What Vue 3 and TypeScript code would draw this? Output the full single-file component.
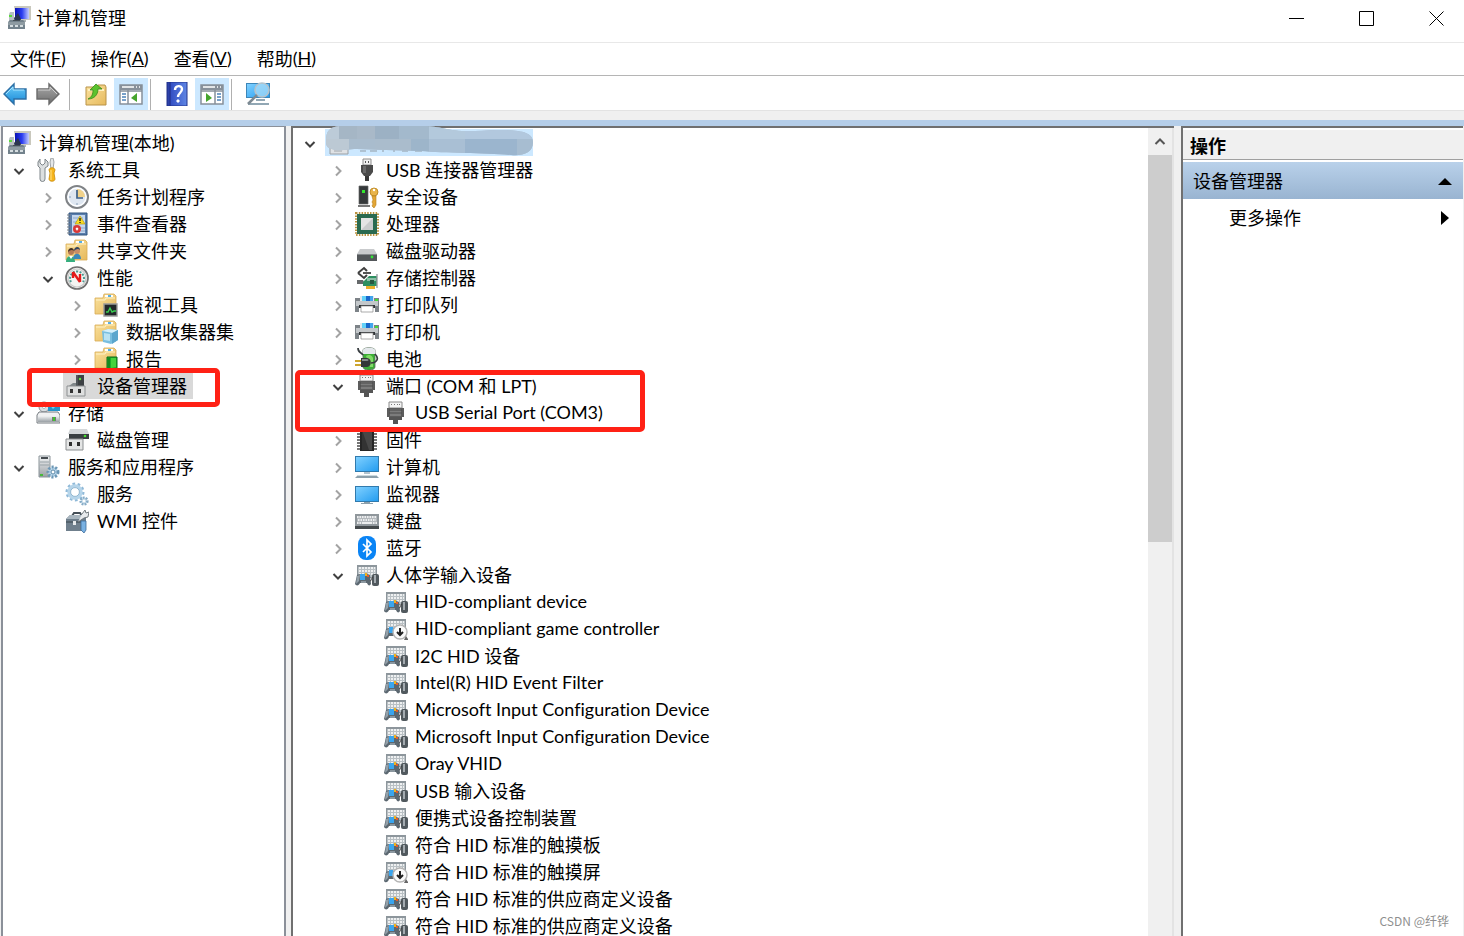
<script setup lang="ts">
interface TreeNode {
  label: string
  icon: string
  depth: number
  open?: boolean
  selected?: boolean
  masked?: boolean
  mark?: string
}

interface Run {
  text: string
  latin: boolean
}

const menus = [
  { label: '文件', key: 'F' },
  { label: '操作', key: 'A' },
  { label: '查看', key: 'V' },
  { label: '帮助', key: 'H' },
]

const consoleTree: TreeNode[] = [
  { label: '计算机管理(本地)', icon: 'console', depth: 0 },
  { label: '系统工具', icon: 'tools', depth: 1, open: true },
  { label: '任务计划程序', icon: 'clock', depth: 2, open: false },
  { label: '事件查看器', icon: 'events', depth: 2, open: false },
  { label: '共享文件夹', icon: 'shared', depth: 2, open: false },
  { label: '性能', icon: 'gauge', depth: 2, open: true },
  { label: '监视工具', icon: 'monitoring', depth: 3, open: false },
  { label: '数据收集器集', icon: 'collector', depth: 3, open: false },
  { label: '报告', icon: 'report', depth: 3, open: false },
  { label: '设备管理器', icon: 'devmgr', depth: 2, selected: true, mark: 'mark-device' },
  { label: '存储', icon: 'storage', depth: 1, open: true },
  { label: '磁盘管理', icon: 'diskmgr', depth: 2 },
  { label: '服务和应用程序', icon: 'services', depth: 1, open: true },
  { label: '服务', icon: 'gears', depth: 2 },
  { label: 'WMI 控件', icon: 'wmi', depth: 2 },
]

const hid = (label: string, icon = 'hid'): TreeNode => ({ label, icon, depth: 2 })

const deviceTree: TreeNode[] = [
  { label: '', icon: 'pc', depth: 0, open: true, masked: true },
  { label: 'USB 连接器管理器', icon: 'usb', depth: 1, open: false },
  { label: '安全设备', icon: 'security', depth: 1, open: false },
  { label: '处理器', icon: 'cpu', depth: 1, open: false },
  { label: '磁盘驱动器', icon: 'drive', depth: 1, open: false },
  { label: '存储控制器', icon: 'controller', depth: 1, open: false },
  { label: '打印队列', icon: 'printer', depth: 1, open: false },
  { label: '打印机', icon: 'printer', depth: 1, open: false },
  { label: '电池', icon: 'battery', depth: 1, open: false },
  { label: '端口 (COM 和 LPT)', icon: 'port', depth: 1, open: true, mark: 'mark-port' },
  { label: 'USB Serial Port (COM3)', icon: 'port', depth: 2 },
  { label: '固件', icon: 'firmware', depth: 1, open: false },
  { label: '计算机', icon: 'computer', depth: 1, open: false },
  { label: '监视器', icon: 'display', depth: 1, open: false },
  { label: '键盘', icon: 'keyboard', depth: 1, open: false },
  { label: '蓝牙', icon: 'bluetooth', depth: 1, open: false },
  { label: '人体学输入设备', icon: 'hid', depth: 1, open: true },
  hid('HID-compliant device'),
  hid('HID-compliant game controller', 'hid-off'),
  hid('I2C HID 设备'),
  hid('Intel(R) HID Event Filter'),
  hid('Microsoft Input Configuration Device'),
  hid('Microsoft Input Configuration Device'),
  hid('Oray VHID'),
  hid('USB 输入设备'),
  hid('便携式设备控制装置'),
  hid('符合 HID 标准的触摸板'),
  hid('符合 HID 标准的触摸屏', 'hid-off'),
  hid('符合 HID 标准的供应商定义设备'),
  hid('符合 HID 标准的供应商定义设备'),
]

const panes = [
  { id: 'console', label: '控制台树', nodes: consoleTree },
  { id: 'devices', label: '设备', nodes: deviceTree },
]

function runs(label: string): Run[] {
  const parts = label.match(/[\x20-\x7e]+|[^\x20-\x7e]+/g) ?? []
  return parts.map((text) => ({ text, latin: text.charCodeAt(0) < 128 }))
}
</script>

<template>
  <div class="window">
    <svg class="sprite" aria-hidden="true">
      <defs>
        <linearGradient id="g-blue" x1="0" y1="0" x2="1" y2="1">
          <stop offset="0" stop-color="#7fd0ff" /><stop offset="1" stop-color="#259df0" />
        </linearGradient>
        <linearGradient id="g-deep" x1="0" y1="0" x2="1" y2="0">
          <stop offset="0" stop-color="#0a12b4" /><stop offset="0.5" stop-color="#2b3df0" /><stop offset="1" stop-color="#c4ccff" />
        </linearGradient>
        <linearGradient id="g-gray" x1="0" y1="0" x2="0" y2="1">
          <stop offset="0" stop-color="#f1f3f4" /><stop offset="1" stop-color="#9aa0a5" />
        </linearGradient>
        <linearGradient id="g-folder" x1="0" y1="0" x2="1" y2="1">
          <stop offset="0" stop-color="#fbe3a0" /><stop offset="1" stop-color="#e6b95c" />
        </linearGradient>
        <linearGradient id="g-arrow" x1="0" y1="0" x2="0" y2="1">
          <stop offset="0" stop-color="#6fd0fb" /><stop offset="1" stop-color="#1787d6" />
        </linearGradient>
        <linearGradient id="g-arrow2" x1="0" y1="0" x2="0" y2="1">
          <stop offset="0" stop-color="#a9a9a9" /><stop offset="1" stop-color="#6e6e6e" />
        </linearGradient>
        <linearGradient id="g-help" x1="0" y1="0" x2="1" y2="0">
          <stop offset="0" stop-color="#26389c" /><stop offset="0.2" stop-color="#3450c4" /><stop offset="1" stop-color="#5f86e4" />
        </linearGradient>
      </defs>

      <symbol id="i-console" viewBox="0 0 24 24">
        <path d="M3 6h4v12H2V8z" fill="#b9c0c4" /><path d="M2 9h3v2H2z" fill="#5bdc3a" />
        <path d="M7 0h17v14H9z" fill="#c9c8bd" /><path d="M8 2h14v11H8z" fill="url(#g-deep)" />
        <path d="M7 12l4-5 3 6-2 5H8z" fill="#2a3550" />
        <path d="M13 14h6v2h-5z" fill="#aeb4b5" />
        <path d="M1 16l2-2h13l2 2v7H1z" fill="#73828c" /><path d="M1 16h17v3H1z" fill="#8e9ba2" />
        <path d="M3 19h3v2H3zM8 19h3v2H8zM13 19h3v2h-3z" fill="#d5dde0" />
        <path d="M6 14h7v1H6z" fill="#444e55" />
      </symbol>
      <symbol id="i-tools" viewBox="0 0 24 24">
        <path d="M4 1L4 5l2 2h1l2-2V1l3 3v4L9 10v11a2 2 0 0 1-5 0V10L2 8V4z" fill="#dcdfe0" stroke="#7f868a" />
        <path d="M15 0h2l1 4-1 7h-2l-1-7z" fill="#e5e7e8" stroke="#8b9093" stroke-width=".8" />
        <path d="M13 12c0-3 6-3 6 0l-1 3 1 6c0 3-6 3-6 0l1-6z" fill="#f6b51c" stroke="#c98a08" stroke-width=".8" /><path d="M15 12v10" stroke="#ffe28a" />
      </symbol>
      <symbol id="i-clock" viewBox="0 0 24 24">
        <circle cx="12" cy="12" r="11" fill="#dfe7f1" stroke="#808386" stroke-width="2" /><circle cx="12" cy="12" r="9" fill="none" stroke="#fff" stroke-width="1.3" />
        <path d="M12 12V4a8 8 0 0 1 8 8z" fill="#f1d28a" /><path d="M12 5v8h6" fill="none" stroke="#3f6288" stroke-width="1.7" />
        <path d="M12 18v2M4 12h2" stroke="#8aa0b8" />
      </symbol>
      <symbol id="i-events" viewBox="0 0 24 24">
        <path d="M4 1h18v22H4z" fill="#5a7fae" stroke="#31547f" /><path d="M7 3h13v18H7z" fill="#c4d7ee" />
        <path d="M2 3h4M2 6h4M2 9h4M2 12h4M2 15h4M2 18h4M2 21h4" stroke="#777f87" />
        <path d="M8 6h10M8 10h5M8 14h4M15 16h5M16 19h4" stroke="#90a9ca" />
        <path d="M15 4l5 8H10z" fill="#fadb21" stroke="#b89b12" stroke-width=".7" /><path d="M15 6v3M15 10v1" stroke="#222" stroke-width="1.4" />
        <circle cx="12" cy="17" r="4" fill="#d93838" /><path d="M11 16l2 2M13 16l-2 2" stroke="#fff" stroke-width="1.3" />
      </symbol>
      <symbol id="i-folder" viewBox="0 0 24 24">
        <path d="M1 5h8l1-4h10l2 2v18H1z" fill="url(#g-folder)" stroke="#d8ab54" stroke-width=".8" />
        <path d="M11 2h8v2h-8z" fill="#fff" /><path d="M14 2h3v2h-3z" fill="#55aee6" /><path d="M2 7h9l1-2h9" fill="none" stroke="#fff2c6" />
      </symbol>
      <symbol id="i-shared" viewBox="0 0 24 24">
        <use href="#i-folder" width="24" height="24" />
        <circle cx="6" cy="13" r="3" fill="#b67b55" /><path d="M3 13c0-5 6-5 6-1-2-2-4-1-6 1z" fill="#463226" /><path d="M1 23c0-8 9-8 9 0z" fill="#35ae7e" />
        <circle cx="12" cy="12" r="3" fill="#c98d66" /><path d="M9 12c0-5 6-5 6-1-2-2-4-1-6 1z" fill="#33475e" /><path d="M8 20c0-7 8-7 8 0z" fill="#3b88b8" /><path d="M4 17l2 3 2-3" fill="#fff" />
      </symbol>
      <symbol id="i-gauge" viewBox="0 0 24 24">
        <circle cx="12" cy="12" r="11" fill="#f4f4f2" stroke="#707070" stroke-width="1.7" /><circle cx="12" cy="12" r="9" fill="none" stroke="#c9c9c9" stroke-width="1.2" />
        <path d="M6 16a7 7 0 1 1 12 0" fill="none" stroke="#4a9a91" stroke-width="2" stroke-dasharray="2 1.4" />
        <path d="M8 6v6M8 6l7 10M15 8v8" fill="none" stroke="#e41b1b" stroke-width="2.4" />
      </symbol>
      <symbol id="i-monitoring" viewBox="0 0 24 24">
        <use href="#i-folder" width="24" height="24" /><path d="M10 11h13v12H10z" fill="#23282a" stroke="#9a9a9a" stroke-width="1.4" />
        <path d="M12 19h2l2-4 2 4 2-1h2" fill="none" stroke="#39cf52" stroke-width="1.4" />
      </symbol>
      <symbol id="i-collector" viewBox="0 0 24 24">
        <use href="#i-folder" width="24" height="24" /><path d="M8 11l6-2 10 1v10l-7 4-8-2z" fill="#79bedf" /><path d="M8 11l6-2 10 1-5 3z" fill="#d5f0fb" /><path d="M18 13l6-3v10l-6 4z" fill="#5ba6cd" /><path d="M10 13l6 1v7l-6-1z" fill="#b9e2f2" />
      </symbol>
      <symbol id="i-report" viewBox="0 0 24 24">
        <use href="#i-folder" width="24" height="24" /><path d="M13 10h10v12H13z" fill="#1fae2c" stroke="#0d6b18" /><path d="M15 11v10" stroke="#0f7f1d" stroke-width="1.5" /><path d="M17 11h5v9l-5 1z" fill="#45d23d" />
      </symbol>
      <symbol id="i-devmgr" viewBox="0 0 24 24">
        <path d="M11 1h8v11h-8z" fill="#3d4144" /><path d="M12 1v10" stroke="#6a7074" /><circle cx="15" cy="5" r="1.2" fill="#5ae83a" />
        <path d="M8 9h3v3H4z" fill="#7f8689" /><path d="M2 12h18v10H2z" fill="#dedfdf" stroke="#8c8f91" /><path d="M5 15h3v4H5zM13 15h3v4h-3z" fill="#333" />
      </symbol>
      <symbol id="i-storage" viewBox="0 0 24 24">
        <circle cx="8" cy="6" r="5" fill="#d9dee2" stroke="#8a9196" /><circle cx="8" cy="6" r="1.600" fill="#fff" stroke="#999" stroke-width=".6" />
        <path d="M12 2h12v8H12z" fill="#2794c8" /><path d="M13 3h9l-5 5z" fill="#76d0ef" /><path d="M3 11h19l2 3v8H1v-8z" fill="#f0f1f2" stroke="#767c81" /><path d="M2 15h21v6H2z" fill="url(#g-gray)" /><path d="M16 16h4v4h-4z" fill="#777" /><path d="M17 16h2v4h-2z" fill="#43c42f" />
      </symbol>
      <symbol id="i-diskmgr" viewBox="0 0 24 24">
        <path d="M5 1h17l2 5H3z" fill="#d4d7d9" /><path d="M4 6h20v5H4z" fill="#3a3f42" /><circle cx="20" cy="8" r="1.300" fill="#45e02e" />
        <path d="M1 11h17v11H1z" fill="#e4e5e5" stroke="#8c8f91" /><path d="M4 14h3v4H4zM12 14h3v4h-3z" fill="#2f2f2f" />
      </symbol>
      <symbol id="i-services" viewBox="0 0 24 24">
        <path d="M3 1h11v21H3z" fill="url(#g-gray)" stroke="#8b9499" /><path d="M5 2h7v2H5z" fill="#464d51" /><path d="M4 7h9M4 10h9" stroke="#98a2a7" /><path d="M4 19h3v2H4z" fill="#49b83b" />
        <circle cx="17" cy="17" r="5" fill="#b9d6ea" stroke="#6b96b5" stroke-width="3" stroke-dasharray="2 1.6" /><circle cx="17" cy="17" r="2" fill="#fff" stroke="#5d89a8" />
      </symbol>
      <symbol id="i-gears" viewBox="0 0 24 24">
        <circle cx="10" cy="10" r="8" fill="none" stroke="#8fb9d8" stroke-width="3" stroke-dasharray="2.6 2.4" /><circle cx="10" cy="10" r="6" fill="none" stroke="#b6d5ea" stroke-width="3.4" /><circle cx="10" cy="10" r="4.4" fill="#fff" stroke="#7fa9c6" stroke-width=".8" />
        <circle cx="19" cy="19" r="3.4" fill="#c7dcea" stroke="#86abc6" stroke-width="2.4" stroke-dasharray="1.7 1.2" /><circle cx="19" cy="19" r="1.3" fill="#fff" />
      </symbol>
      <symbol id="i-wmi" viewBox="0 0 24 24">
        <path d="M7 7l2-3h6l2 3" fill="none" stroke="#454f57" stroke-width="2" /><path d="M1 10l4-4h16v13l-3 3H1z" fill="#6f7f8c" /><path d="M1 10l4-4h16l-3 4z" fill="#a9b6bf" /><path d="M1 13h17" stroke="#4a565f" stroke-width="1.4" /><path d="M8 12h3v4H8z" fill="#e6e9eb" />
        <path d="M17 5l3-4 1 3 3-1-1 5-4 1-6 4" fill="#e7eaec" stroke="#666e73" stroke-width=".9" /><path d="M16 12h5v9l-2 3-3-3z" fill="#79b1e2" stroke="#3e6d9d" stroke-width=".8" />
      </symbol>

      <symbol id="i-pc" viewBox="0 0 24 24">
        <path d="M3 8h18v15H3z" fill="#dfe2e5" stroke="#9aa0a5" /><path d="M5 10h14v7H5z" fill="#b9c8d6" /><path d="M7 20h8" stroke="#a2a6aa" />
      </symbol>
      <symbol id="i-usb" viewBox="0 0 24 24">
        <path d="M8 1h8v6H8z" fill="#f0f0f0" stroke="#8e8e8e" /><path d="M10 3h1v2h-1zM13 3h1v2h-1z" fill="#555" />
        <path d="M6 7h12v7l-3 4H9l-3-4z" fill="#4a4a4a" /><path d="M8 8h3v7H8z" fill="#6a6a6a" /><path d="M10 18h4v5h-4z" fill="#383838" />
      </symbol>
      <symbol id="i-security" viewBox="0 0 24 24">
        <path d="M4 1h9v18H4z" fill="#35393b" stroke="#666" stroke-width=".7" /><path d="M3 20h12v2H3z" fill="#777" /><path d="M7 5h3v3H7z" fill="#33e72e" />
        <circle cx="19" cy="7" r="4" fill="#e9b44a" stroke="#b5801b" stroke-width=".8" /><circle cx="19" cy="5" r="1.200" fill="#fff" /><path d="M17 11h4v9l-2 3-2-2 1-2-1-2 1-2z" fill="#e3a636" stroke="#b5801b" stroke-width=".6" />
      </symbol>
      <symbol id="i-cpu" viewBox="0 0 24 24">
        <path d="M1 1h22v22H1z" fill="none" stroke="#b9923f" stroke-width="2" stroke-dasharray="1.5 1.3" /><path d="M2 2h20v20H2z" fill="#2a6a50" /><path d="M6 6h12v12H6z" fill="#e4e4e4" /><path d="M18 6v12H6z" fill="#c9cbcc" />
      </symbol>
      <symbol id="i-drive" viewBox="0 0 24 24">
        <path d="M5 10h14l3 5H2z" fill="#c9cbcd" /><path d="M2 15h20v7H2z" fill="#53575a" /><path d="M2 15h20v1H2z" fill="#85898c" /><circle cx="17" cy="18" r="1.4" fill="#35e43a" />
      </symbol>
      <symbol id="i-controller" viewBox="0 0 24 24">
        <path d="M3 7l6-5 3 3M3 7l6 5 3-3" fill="none" stroke="#3f3f3f" stroke-width="2" /><path d="M8 7h8" fill="none" stroke="#555" stroke-width="2" /><path d="M2 14h6l2 4H2z" fill="#66696b" />
        <path d="M8 16l6-6h8v10H8z" fill="#2e9061" /><path d="M12 12h9v3h-9z" fill="#8dbea6" /><path d="M15 14h4v4h-4z" fill="#285841" /><path d="M11 20h9v3h-9z" fill="#eab02c" /><path d="M22 8v14" stroke="#9a9fa2" stroke-width="1.4" />
      </symbol>
      <symbol id="i-printer" viewBox="0 0 24 24">
        <path d="M5 3h14v6H5z" fill="#e0e8ee" /><path d="M7 3h4v5H7z" fill="#62d1f7" /><path d="M11 3h4v5h-4z" fill="#1768cc" /><path d="M15 3h3v5h-3z" fill="#42a5ed" />
        <path d="M0 5h5v3h14V5h5v14h-4v-4H4v4H0z" fill="#7d8388" /><path d="M1 8h22v5H1z" fill="#c3c7ca" /><path d="M20 6h3v2h-3z" fill="#46db37" /><path d="M4 12h16v3H4z" fill="#303437" /><path d="M6 13h12v6H6z" fill="#fff" stroke="#888" stroke-width=".7" />
      </symbol>
      <symbol id="i-battery" viewBox="0 0 24 24">
        <path d="M8 3c0-3 12-3 12 0v17c0 4-12 4-12 0z" fill="#3cad37" stroke="#5d6a60" stroke-width=".8" /><path d="M8 3c0-3 12-3 12 0v4H8z" fill="#e4e8ec" /><path d="M11 9c3-2 6-1 7 2v9h-3z" fill="#80da66" />
        <path d="M3 1c0 5 3 4 5 7M20 7c5 5 1 9-4 9" fill="none" stroke="#383d40" stroke-width="1.7" /><path d="M6 11h6c5 0 5 9 0 9H6z" fill="#333638" /><path d="M7 12h5c2 0 2 2 0 2H7z" fill="#858b8e" /><path d="M0 14h6M0 18h6" stroke="#cda52e" stroke-width="2" />
      </symbol>
      <symbol id="i-port" viewBox="0 0 24 24">
        <path d="M5 1h13v6H5z" fill="#f4f4f4" stroke="#8a8a8a" /><path d="M7 3h1v1H7zM10 3h1v1h-1zM13 3h1v1h-1zM15 3h1v1h-1z" fill="#777" />
        <path d="M3 7h17v9H3z" fill="#5c5c5c" /><path d="M6 8h11v7H6z" fill="#7c7c7c" /><path d="M5 9h13M5 12h13" stroke="#4a4a4a" /><path d="M5 16h4v3H5zM14 16h4v3h-4zM9 16h5v7H9z" fill="#555" />
      </symbol>
      <symbol id="i-firmware" viewBox="0 0 24 24">
        <path d="M2 3h20M2 6h20M2 9h20M2 12h20M2 15h20M2 18h20M2 21h20" stroke="#494949" stroke-width="1.3" /><path d="M5 1h14v22H5z" fill="#252525" /><path d="M7 2h10v20H7z" fill="#474747" /><path d="M7 2l7 20H7z" fill="#333" />
      </symbol>
      <symbol id="i-computer" viewBox="0 0 24 24">
        <path d="M0 1h24v16H0z" fill="#317aad" /><path d="M1 2h22v14H1z" fill="url(#g-blue)" /><path d="M9 17h6v2H9z" fill="#b2c3ce" /><path d="M2 21h20l2 2H0z" fill="#8da0ab" /><path d="M2 20h20v1H2z" fill="#ccd9df" />
      </symbol>
      <symbol id="i-display" viewBox="0 0 24 24">
        <path d="M0 4h24v16H0z" fill="#317aad" /><path d="M1 5h22v14H1z" fill="url(#g-blue)" /><path d="M9 20h6v1h3v1H6v-1h3z" fill="#8da0ab" />
      </symbol>
      <symbol id="i-keyboard" viewBox="0 0 24 24">
        <path d="M0 5h24v14H0z" fill="#90979c" /><path d="M2 7h20v8H2z" fill="#b4b9bd" /><path d="M2 8h20M3 11h18M2 14h4M18 14h4" stroke="#fff" stroke-width="1.5" stroke-dasharray="1.5 1" /><path d="M7 14h10" stroke="#fff" stroke-width="1.5" /><path d="M0 17h24v3H0z" fill="#454a4d" />
      </symbol>
      <symbol id="i-bluetooth" viewBox="0 0 24 24">
        <rect x="3" width="18" height="24" rx="8" fill="#0a84f5" /><path d="M8 8l8 8-4 4V4l4 4-8 8" fill="none" stroke="#fff" stroke-width="1.7" />
      </symbol>
      <symbol id="i-hid-base" viewBox="0 0 24 24">
        <path d="M2 2h20v13H2z" fill="#8d969c" /><path d="M3 4h18v10H3z" fill="#b9c0c4" /><path d="M4 5h16M4 8h16M4 11h16" stroke="#fff" stroke-width="1.7" stroke-dasharray="2 1" />
      </symbol>
      <symbol id="i-hid" viewBox="0 0 24 24">
        <use href="#i-hid-base" width="24" height="24" />
        <path d="M2 12c1-1 3-1 5-1h3c2 0 4 0 5 1l1 9c-1 2-3 2-4-1H5c-1 3-4 3-5 1z" fill="#5b6770" /><path d="M2 13l3-1-1 6-3 3z" fill="#93a0a9" /><path d="M5 11h5v6H5z" fill="#3aa5ee" /><path d="M10 10h2v3h-2z" fill="#f2b21c" /><path d="M12 12h2v2h-2z" fill="#e35b2d" /><path d="M6 18h5v2H6z" fill="#8b979f" />
        <rect x="17" y="11" width="7" height="12" rx="2" fill="#51595e" /><path d="M19 12h2v8h-2z" fill="#a4abb0" /><path d="M15 18c2 0 1-3 3-4" fill="none" stroke="#444" />
      </symbol>
      <symbol id="i-hid-off" viewBox="0 0 24 24">
        <use href="#i-hid-base" width="24" height="24" /><path d="M2 12c1-1 3-1 5-1h3v8H5c-1 4-4 4-5 2z" fill="#5b6770" /><path d="M2 13l3-1-1 6-3 3z" fill="#93a0a9" /><path d="M5 10h4v6H5z" fill="#3aa5ee" />
        <circle cx="16" cy="15" r="7" fill="#fafafa" stroke="#b4b4b4" stroke-width="1.4" /><path d="M16 11v7M13 15l3 3 3-3" fill="none" stroke="#222" stroke-width="2" /><path d="M22 19l2 3v1h-4z" fill="#666" />
      </symbol>

      <symbol id="t-back" viewBox="0 0 24 24"><path d="M1 12L11 2v5h12v10H11v5z" fill="url(#g-arrow)" stroke="#2d6fa5" stroke-width="1.4" /><path d="M3 12l7-7v3h11" fill="none" stroke="#a7e3ff" /></symbol>
      <symbol id="t-forward" viewBox="0 0 24 24"><path d="M23 12L13 2v5H1v10h12v5z" fill="url(#g-arrow2)" stroke="#6b6b6b" stroke-width="1.4" /><path d="M2 8h12V5l7 7" fill="none" stroke="#cfcfcf" /></symbol>
      <symbol id="t-up" viewBox="0 0 24 24">
        <path d="M2 5h10l2-2h7l1 2v18H2z" fill="url(#g-folder)" stroke="#b99349" /><path d="M4 7h16v2H4z" fill="#fff0c0" /><path d="M4 17c4-2 5-5 5-9H6l6-6 6 5h-4c0 6-4 10-10 10z" fill="#5bc22e" stroke="#38891a" stroke-width=".8" />
      </symbol>
      <symbol id="t-tree" viewBox="0 0 24 24">
        <path d="M1 3h22v19H1z" fill="#fff" stroke="#87909a" stroke-width="1.5" /><path d="M1 3h22v5H1z" fill="#87909a" /><path d="M3 5h12M17 5h1M20 5h1" stroke="#fff" stroke-width="1.4" /><path d="M9 8v14M1 9h22" stroke="#87909a" stroke-width="1.5" />
        <path d="M3 12h4M3 15h4M3 18h4" stroke="#4c83b9" stroke-width="1.6" /><path d="M18 11v9l-6-4z" fill="#46a52d" />
      </symbol>
      <symbol id="t-actions" viewBox="0 0 24 24">
        <path d="M1 3h22v19H1z" fill="#fff" stroke="#87909a" stroke-width="1.5" /><path d="M1 3h22v5H1z" fill="#87909a" /><path d="M3 5h12M17 5h1M20 5h1" stroke="#fff" stroke-width="1.4" /><path d="M15 8v14M1 9h22" stroke="#87909a" stroke-width="1.5" />
        <path d="M17 12h4M17 15h4M17 18h4" stroke="#4c83b9" stroke-width="1.6" /><path d="M6 11v9l6-4z" fill="#46a52d" />
      </symbol>
      <symbol id="t-help" viewBox="0 0 24 24">
        <path d="M2 0h20v24H2z" fill="url(#g-help)" stroke="#22358d" /><path d="M5 0v24" stroke="#1e2d82" /><path d="M10 8c0-5 7-5 7-1 0 4-4 4-4 8" fill="none" stroke="#fff" stroke-width="2.4" /><path d="M12 18h2v2h-2z" fill="#fff" stroke="#fff" />
      </symbol>
      <symbol id="t-scan" viewBox="0 0 24 24">
        <path d="M0 1h24v15H0z" fill="#3d86b8" /><path d="M1 2h22v13H1z" fill="url(#g-blue)" /><path d="M2 21h21v2H2zM10 17h9v2h-9z" fill="#91a7b4" /><circle cx="16" cy="8" r="7" fill="#a8dcf8" fill-opacity=".75" stroke="#b5c3cc" stroke-width="1.6" /><path d="M11 13l-9 9" stroke="#7d8a93" stroke-width="2.6" />
      </symbol>
    </svg>

    <header class="titlebar">
      <svg class="icon"><use href="#i-console" /></svg>
      <h1>计算机管理</h1>
      <div class="caption">
        <button type="button" aria-label="最小化"><svg viewBox="0 0 16 16"><path d="M0 8.500h15" /></svg></button>
        <button type="button" aria-label="最大化"><svg viewBox="0 0 16 16"><path d="M.5 1.500h14v14H.5z" /></svg></button>
        <button type="button" aria-label="关闭"><svg viewBox="0 0 16 16"><path d="M.5 1.500l14 14M14.500 1.500l-14 14" /></svg></button>
      </div>
    </header>

    <nav class="menubar">
      <button v-for="m in menus" :key="m.key" type="button">{{ m.label }}<span class="latin">(<u>{{ m.key }}</u>)</span></button>
    </nav>

    <div class="toolbar">
      <button class="nav" type="button" aria-label="后退"><svg class="icon"><use href="#t-back" /></svg></button>
      <button class="nav" type="button" aria-label="前进"><svg class="icon"><use href="#t-forward" /></svg></button>
      <span class="sep"></span>
      <button type="button" aria-label="上一级"><svg class="icon"><use href="#t-up" /></svg></button>
      <button class="on" type="button" aria-label="显示控制台树"><svg class="icon"><use href="#t-tree" /></svg></button>
      <span class="sep"></span>
      <button type="button" aria-label="帮助"><svg class="icon"><use href="#t-help" /></svg></button>
      <button class="on" type="button" aria-label="显示操作窗格"><svg class="icon"><use href="#t-actions" /></svg></button>
      <span class="sep"></span>
      <button type="button" aria-label="扫描硬件改动"><svg class="icon"><use href="#t-scan" /></svg></button>
    </div>
    <div class="strip"></div>

    <main class="body">
      <section v-for="pane in panes" :key="pane.id" class="pane" :class="pane.id" :aria-label="pane.label">
        <ul class="tree">
          <li v-for="(node, i) in pane.nodes" :key="i" class="row" :class="'depth-' + node.depth">
            <button v-if="node.open !== undefined" class="twisty" type="button" :aria-expanded="node.open" :aria-label="node.label || '计算机'">
              <svg v-if="node.open" class="opened" viewBox="0 0 12 12"><path d="M1.500 4L6 8.500 10.500 4" /></svg>
              <svg v-else viewBox="0 0 12 12"><path d="M4 1.500L8.500 6 4 10.500" /></svg>
            </button>
            <span v-else class="twisty"></span>
            <span class="node" :class="{ selected: node.selected, masked: node.masked }">
              <svg class="icon"><use :href="'#i-' + node.icon" /></svg>
              <span class="label"><span v-for="(run, r) in runs(node.label)" :key="r" :class="{ latin: run.latin }">{{ run.text }}</span></span>
              <svg v-if="node.masked" class="mosaic" viewBox="0 0 208 27">
                <path d="M35 22h6M45 22h7M57 22h2M68 22h2M77 22h6M90 22h7" stroke="#8f9ba5" />
                <clipPath id="blob"><path d="M1 13C1 2 4-3 18-3H98C116-3 124 3 150 2C178 1 208-2 208 13C208 24 198 27 186 26C160 24 120 24 96 22C70 21 50 21 32 20C22 20 18 22 10 21C3 19 1 18 1 13Z" /></clipPath>
                <g clip-path="url(#blob)">
                  <path d="M0-3h208v30H0z" fill="#aebfd0" />
                  <path d="M0-3h14v13H0z" fill="#bccbd8" /><path d="M14-3h18v13H14z" fill="#a5b6c5" /><path d="M32-3h18v13H32z" fill="#a9b9c8" /><path d="M50-3h24v13H50z" fill="#9cb1c4" /><path d="M74-3h30v13H74z" fill="#a3b9cc" /><path d="M104-3h36v13h-36z" fill="#b3c9dc" /><path d="M140-3h68v13h-68z" fill="#b2c8de" />
                  <path d="M0 10h24v17H0z" fill="#bcc9d4" /><path d="M24 10h26v17H24z" fill="#a9bccd" /><path d="M50 10h36v17H50z" fill="#aabccc" /><path d="M86 10h18v17H86z" fill="#9db5ca" /><path d="M104 10h36v17h-36z" fill="#a9bfd4" /><path d="M140 10h52v17h-52z" fill="#9bb5ce" /><path d="M192 10h16v17h-16z" fill="#a7bdd1" />
                </g>
              </svg>
            </span>
            <span v-if="node.mark" class="mark" :class="node.mark"></span>
          </li>
        </ul>
        <div v-if="pane.id === 'devices'" class="scrollbar">
          <button type="button" aria-label="向上滚动"><svg viewBox="0 0 12 12"><path d="M1.500 8L6 3.500 10.500 8" /></svg></button>
          <div class="track"><div class="thumb"></div></div>
        </div>
      </section>

      <aside class="actions">
        <h2>操作</h2>
        <button class="group" type="button">设备管理器<svg viewBox="0 0 16 16"><path d="M1 12L8 5l7 7z" /></svg></button>
        <button class="more" type="button">更多操作<svg viewBox="0 0 16 16"><path d="M4 1l8 7-8 7z" /></svg></button>
        <p class="credit">CSDN @纤铧</p>
      </aside>
    </main>
  </div>
</template>

<style>
body {
  margin: 0;
  overflow: hidden;
}
</style>

<style scoped>
.window {
  display: flex;
  flex-direction: column;
  height: 100vh;
  overflow: hidden;
  background: #f0f0f0;
  color: #000;
  font: 18px/27px "Noto Sans CJK SC", sans-serif;
}
.latin {
  font-family: Lato, "Open Sans", sans-serif;
  font-size: 18px;
  font-variant-ligatures: none;
  white-space: pre;
}
.sprite {
  position: absolute;
  width: 0;
  height: 0;
}
.icon {
  flex: none;
  width: 24px;
  height: 24px;
}
button {
  display: flex;
  align-items: center;
  margin: 0;
  padding: 0;
  border: 0;
  background: none;
  color: inherit;
  font: inherit;
}

.titlebar {
  display: flex;
  align-items: center;
  box-sizing: border-box;
  height: 43px;
  padding: 0 0 6px 7px;
  border-bottom: 1px solid #e8e8e8;
  background: #fff;
}
.titlebar h1 {
  margin: 0 0 2px 5px;
  font-size: 18px;
  font-weight: 400;
}
.caption {
  display: flex;
  gap: 15px;
  margin-left: auto;
}
.caption button {
  justify-content: center;
  width: 55px;
  height: 36px;
}
.caption svg {
  width: 16px;
  height: 16px;
  fill: none;
  stroke: #000;
}

.menubar {
  display: flex;
  gap: 25px;
  height: 32px;
  padding-left: 10px;
  border-bottom: 1px solid #b5b5b5;
  background: #fff;
}
.menubar button {
  padding-bottom: 2px;
}
.toolbar {
  display: flex;
  align-items: flex-end;
  gap: 1px;
  height: 34px;
  padding-left: 2px;
  border-bottom: 1px solid #e3e3e3;
  background: #fff;
}
.toolbar button {
  justify-content: center;
  width: 34px;
  height: 32px;
}
.toolbar .nav {
  width: 32px;
  padding-right: 6px;
}
.toolbar .on {
  background: #cce8ff;
}
.sep {
  width: 1px;
  height: 31px;
  margin: 0 8px 0 1px;
  background: #b0b0b0;
}
.strip {
  height: 9px;
  border-bottom: 6px solid #b5cee9;
}

.body {
  flex: 1;
  display: grid;
  grid-template-columns: 285px minmax(0, 1fr) 282px;
  gap: 5px;
  min-height: 0;
  padding: 0 1px;
}
.pane {
  display: flex;
  min-height: 0;
  box-sizing: border-box;
  background: #fff;
}
.console {
  border: solid #8b9099;
  border-width: 1px 2px 0;
}
.devices {
  margin-right: 2px;
  border: solid #707070;
  border-width: 2px 0 0 2px;
}
.tree {
  flex: 1;
  min-width: 0;
  margin: 0;
  padding: 2px 0 0;
  list-style: none;
}
.devices .tree {
  padding-top: 1px;
}
.row {
  position: relative;
  display: flex;
  height: 27px;
}
.devices .row {
  padding-left: 1px;
}
.console .depth-0 .twisty {
  width: 2px;
}
.console .depth-2 {
  padding-left: 29px;
}
.console .depth-3 {
  padding-left: 58px;
}
.devices .depth-1 {
  padding-left: 29px;
}
.devices .depth-2 {
  padding-left: 58px;
}
.twisty {
  flex: none;
  justify-content: center;
  width: 31px;
  padding-top: 2px;
}
.twisty svg {
  width: 12px;
  height: 12px;
  fill: none;
  stroke: #a3a3a3;
  stroke-width: 2;
}
.twisty .opened {
  stroke: #404040;
}
.node {
  position: relative;
  display: flex;
  align-items: center;
  gap: 7px;
  padding: 0 6px 0 2px;
}
.console .node {
  gap: 8px;
}
.label {
  display: flex;
  align-items: baseline;
  white-space: nowrap;
}
.selected {
  background: #d9d9d9;
}
.masked {
  box-sizing: border-box;
  width: 208px;
  background: #cce8ff;
}
.mosaic {
  position: absolute;
  inset: 0;
  width: 208px;
  height: 27px;
  overflow: visible;
}
.mark {
  position: absolute;
  z-index: 1;
  box-sizing: border-box;
  border: 5px solid #ff2115;
  border-radius: 5px;
}
.mark-device {
  top: -4px;
  left: 24px;
  width: 193px;
  height: 39px;
}
.mark-port {
  top: -2px;
  left: 2px;
  width: 350px;
  height: 62px;
}

.scrollbar {
  display: flex;
  flex-direction: column;
  width: 24px;
  border-right: 2px solid #e3e3e3;
  background: #f0f0f0;
}
.scrollbar button {
  justify-content: center;
  height: 27px;
}
.scrollbar svg {
  width: 12px;
  height: 12px;
  fill: none;
  stroke: #555;
  stroke-width: 2;
}
.track {
  flex: 1;
}
.thumb {
  height: 49.5%;
  background: #cdcdcd;
}

.actions {
  display: flex;
  flex-direction: column;
  border: solid #707070;
  border-width: 2px 0 0 2px;
  background: #fff;
}
.actions h2 {
  margin: 2px 0;
  padding: 2px 7px 0;
  border-bottom: 1px solid #a0a0a0;
  background: #f0f0f0;
  font-size: 18px;
  font-weight: 700;
}
.actions svg {
  width: 16px;
  height: 16px;
}
.actions button {
  justify-content: space-between;
  height: 37px;
  padding: 0 10px;
}
.actions .group {
  background: linear-gradient(#b9d1ea, #99b4d1);
}
.actions .more {
  padding-left: 46px;
}
.credit {
  margin: auto 14px 5px auto;
  color: #8f8f8f;
  font-size: 12px;
  line-height: 20px;
}
</style>
